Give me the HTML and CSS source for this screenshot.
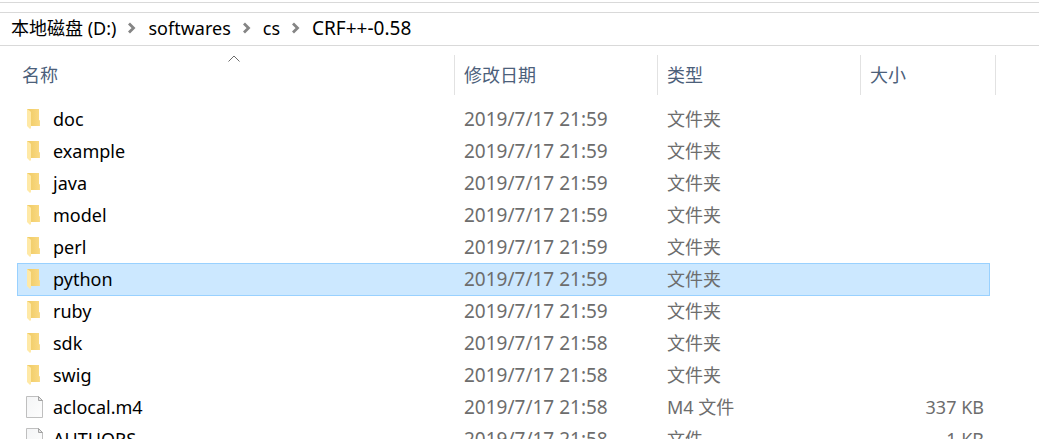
FILE: index.html
```
<!DOCTYPE html>
<html lang="zh-CN">
<head>
    <meta charset="UTF-8">
    <meta name="viewport" content="width=device-width, initial-scale=1.0">
    <title>CRF++-0.58</title>
    <link rel="stylesheet" href="styles.css">
</head>
<body>
    <svg class="symbols" aria-hidden="true">
        <defs>
            <linearGradient id="folderBack" x1="0" y1="0" x2="1" y2="0">
                <stop offset="0" stop-color="#efca62"/>
                <stop offset="1" stop-color="#fada84"/>
            </linearGradient>
            <linearGradient id="paper" x1="0" y1="0" x2="1" y2="1">
                <stop offset="0" stop-color="#f4f5f6"/>
                <stop offset="1" stop-color="#fdfdfd"/>
            </linearGradient>
        </defs>
        <symbol id="folder" viewBox="0 0 18 22">
            <path fill="url(#folderBack)" d="M1 1h12v11l1 1v5H5L1 16z"/>
            <path fill="#ffe9a6" d="M1 1l3 2 1 1v16l-1 1-3-3z"/>
            <path fill="#f9dc8b" d="M13 12l1 1v5h-1z"/>
        </symbol>
        <symbol id="file" viewBox="0 0 18 22">
            <path fill="url(#paper)" stroke="#bfbfbf" d="M.5.5h12l4 4v17H.5z"/>
            <path fill="#e4e4e4" stroke="#a3a3a3" d="M12.5.5v4h4z"/>
        </symbol>
        <symbol id="chevron" viewBox="0 0 8 12">
            <path fill="none" stroke="#858585" stroke-width="2.800" d="M1 1.500L5.500 6 1 10.500"/>
        </symbol>
    </svg>

    <div class="explorer">
        <nav class="address">
            <a href="#">本地磁盘 (D:)</a>
            <svg class="chevron"><use href="#chevron"/></svg>
            <a href="#">softwares</a>
            <svg class="chevron"><use href="#chevron"/></svg>
            <a href="#">cs</a>
            <svg class="chevron"><use href="#chevron"/></svg>
            <a class="current" href="#">CRF++-0.58</a>
        </nav>

        <table class="files">
            <thead>
                <tr>
                    <th class="name">
                        <svg class="sort" viewBox="0 0 12 7"><path fill="none" stroke="#6b6b6b" d="M.5 6.5L6 1l5.500 5.500"/></svg>
                        <button>名称</button>
                    </th>
                    <th class="date"><button>修改日期</button></th>
                    <th class="type"><button>类型</button></th>
                    <th class="size"><button>大小</button></th>
                    <th class="end"></th>
                </tr>
            </thead>
            <tbody>
                <tr><td><svg class="icon"><use href="#folder"/></svg>doc</td><td class="time">2019/7/17 21:59</td><td>文件夹</td><td></td></tr>
                <tr><td><svg class="icon"><use href="#folder"/></svg>example</td><td class="time">2019/7/17 21:59</td><td>文件夹</td><td></td></tr>
                <tr><td><svg class="icon"><use href="#folder"/></svg>java</td><td class="time">2019/7/17 21:59</td><td>文件夹</td><td></td></tr>
                <tr><td><svg class="icon"><use href="#folder"/></svg>model</td><td class="time">2019/7/17 21:59</td><td>文件夹</td><td></td></tr>
                <tr><td><svg class="icon"><use href="#folder"/></svg>perl</td><td class="time">2019/7/17 21:59</td><td>文件夹</td><td></td></tr>
                <tr class="selected"><td><svg class="icon"><use href="#folder"/></svg>python</td><td class="time">2019/7/17 21:59</td><td>文件夹</td><td></td></tr>
                <tr><td><svg class="icon"><use href="#folder"/></svg>ruby</td><td class="time">2019/7/17 21:59</td><td>文件夹</td><td></td></tr>
                <tr><td><svg class="icon"><use href="#folder"/></svg>sdk</td><td class="time">2019/7/17 21:58</td><td>文件夹</td><td></td></tr>
                <tr><td><svg class="icon"><use href="#folder"/></svg>swig</td><td class="time">2019/7/17 21:58</td><td>文件夹</td><td></td></tr>
                <tr><td><svg class="icon"><use href="#file"/></svg>aclocal.m4</td><td class="time">2019/7/17 21:58</td><td>M4 文件</td><td>337 KB</td></tr>
                <tr><td><svg class="icon"><use href="#file"/></svg>AUTHORS</td><td class="time">2019/7/17 21:58</td><td>文件</td><td>1 KB</td></tr>
            </tbody>
        </table>
    </div>
</body>
</html>
```

FILE: styles.css
```
* {
    box-sizing: border-box;
}
body {
    margin: 0;
    background-color: #fff;
    color: #000;
    font-family: "Noto Sans", "Noto Sans CJK SC", sans-serif;
    font-size: 18px;
    line-height: 24px;
}
.symbols {
    position: absolute;
    width: 0;
    height: 0;
}
.explorer {
    height: 100vh;
    padding-top: 2px;
    overflow: hidden;
}
.explorer::before {
    content: "";
    display: block;
    height: 9px;
    border-top: 1px solid #d9d9d9;
}
.address {
    display: flex;
    align-items: center;
    gap: 12px;
    height: 34px;
    padding: 0 11px 3px;
    border-top: 1px solid #d9d9d9;
    border-bottom: 1px solid #d9d9d9;
}
.address a {
    color: #000;
    text-decoration: none;
}
.address .current {
    font-size: 19px;
}
.chevron {
    width: 8px;
    height: 12px;
}

/* file list */
.files {
    margin: 9px 0 0 17px;
    border-spacing: 0;
    table-layout: fixed;
    width: 979px;
}
.files th {
    position: relative;
    height: 40px;
    padding: 0;
    border-right: 1px solid #e2e2e2;
    text-align: left;
}
.files .name {
    width: 438px;
}
.files .date,
.files .type {
    width: 203px;
}
.files .size {
    width: 129px;
    border-right: none;
}
.files th button {
    width: 100%;
    padding: 0 9px;
    border: none;
    background: none;
    color: #4c607a;
    font: inherit;
    font-weight: 400;
    text-align: left;
}
.files .name button {
    padding-left: 5px;
}
.sort {
    position: absolute;
    top: 0;
    left: 211px;
    width: 12px;
    height: 7px;
}
.files tbody::before {
    content: "";
    display: block;
    height: 8px;
}
.files td {
    height: 32px;
    padding: 0 9px;
    color: #6d6d6d;
    white-space: nowrap;
}
.files td:first-child {
    padding-top: 2px;
    color: #000;
}
.files td:nth-child(4) {
    padding-right: 6px;
    text-align: right;
}
.files .time {
    font-size: 19px;
}
.icon {
    width: 18px;
    height: 22px;
    margin-right: 9px;
    margin-bottom: 3px;
    vertical-align: middle;
}
.selected td {
    background-color: #cce8ff;
    box-shadow: inset 0 1px #99d1ff, 0 1px #99d1ff;
}
.selected td:first-child {
    box-shadow: inset 1px 1px #99d1ff, 0 1px #99d1ff;
}
.selected td:last-child {
    box-shadow: inset -1px 1px #99d1ff, 0 1px #99d1ff;
}
```
